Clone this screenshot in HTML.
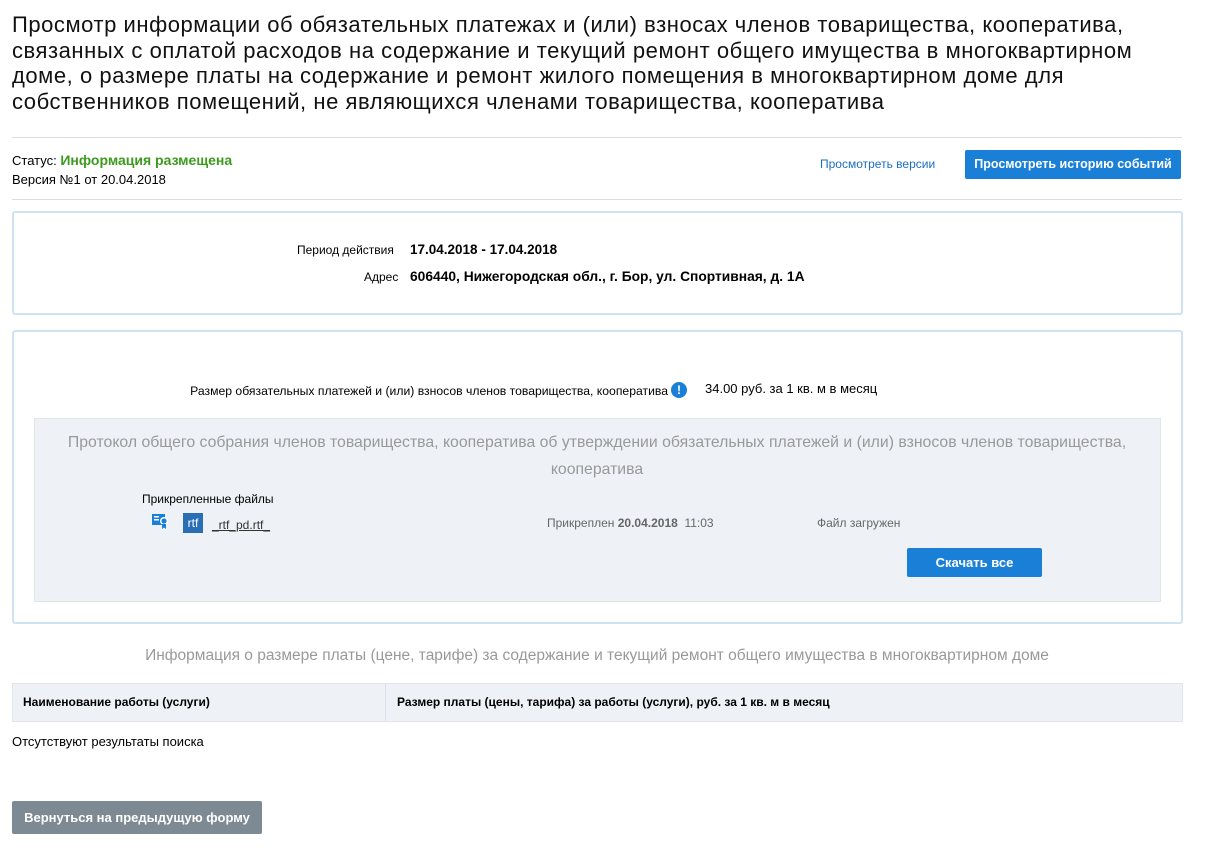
<!DOCTYPE html>
<html><head><meta charset="utf-8"><style>
body{margin:0;background:#fff;font-family:"Liberation Sans",sans-serif;color:#000;width:1217px;height:857px;overflow:hidden;position:relative}
.a{position:absolute;white-space:nowrap}
h1{position:absolute;left:12px;top:12px;margin:0;font-weight:normal;font-size:22px;line-height:25.7px;white-space:nowrap;letter-spacing:0.55px;color:#111}
.hr{position:absolute;left:12px;width:1170px;height:1px;background:#ddd}
.box{position:absolute;left:12px;width:1167px;border:2px solid #cfe3f4;border-radius:3px;background:#fff}
.btn{position:absolute;background:#1a7fd6;color:#fff;font-size:13px;font-weight:bold;text-align:center;border-radius:2px}
</style></head><body>
<h1>Просмотр информации об обязательных платежах и (или) взносах членов товарищества, кооператива,<br>связанных с оплатой расходов на содержание и текущий ремонт общего имущества в многоквартирном<br>доме, о размере платы на содержание и ремонт жилого помещения в многоквартирном доме для<br>собственников помещений, не являющихся членами товарищества, кооператива</h1>
<div class="hr" style="top:137px"></div>
<div class="a" style="left:12px;top:152px;font-size:13px">Статус: <b style="color:#3c9a1e;font-size:14px">Информация размещена</b></div>
<div class="a" style="left:12px;top:172px;font-size:13px">Версия №1 от 20.04.2018</div>
<div class="a" style="left:820px;top:157px;font-size:12px;color:#1a6fc0">Просмотреть версии</div>
<div class="btn" style="left:965px;top:150px;width:216px;height:29px;line-height:29px;font-size:12.5px">Просмотреть историю событий</div>
<div class="hr" style="top:199px"></div>
<div class="box" style="top:211px;height:100px"></div>
<div class="a" style="left:297px;top:243px;font-size:12px">Период действия</div>
<div class="a" style="left:410px;top:242px;font-size:13.5px;font-weight:bold">17.04.2018 - 17.04.2018</div>
<div class="a" style="left:364px;top:270px;font-size:12px">Адрес</div>
<div class="a" style="left:410px;top:269px;font-size:13.8px;font-weight:bold">606440, Нижегородская обл., г. Бор, ул. Спортивная, д. 1А</div>
<div class="box" style="top:330px;height:290px"></div>
<div class="a" style="right:549px;top:384px;font-size:12.2px">Размер обязательных платежей и (или) взносов членов товарищества, кооператива</div>
<div class="a" style="left:671px;top:382px;width:16px;height:16px;border-radius:50%;background:#1a7fd6;color:#fff;font-size:12px;font-weight:bold;text-align:center;line-height:16px">!</div>
<div class="a" style="left:705px;top:381px;font-size:13px">34.00 руб. за 1 кв. м в месяц</div>
<div style="position:absolute;left:34px;top:418px;width:1125px;height:182px;background:#eef1f5;border:1px solid #e2e6ea"></div>
<div class="a" style="left:34px;top:429px;width:1126px;text-align:center;white-space:normal;font-size:15.8px;line-height:27px;color:#999">Протокол общего собрания членов товарищества, кооператива об утверждении обязательных платежей и (или) взносов членов товарищества, кооператива</div>
<div class="a" style="left:142px;top:492px;font-size:12px">Прикрепленные файлы</div>
<svg class="a" style="left:152px;top:514px" width="18" height="16" viewBox="0 0 18 16"><rect x="0" y="0" width="13" height="11" fill="#1a7fd6"/><rect x="2" y="2" width="5" height="1.5" fill="#fff"/><rect x="2" y="5" width="5" height="1.5" fill="#fff"/><circle cx="12" cy="7" r="4" fill="#fff"/><circle cx="12" cy="7" r="2.6" fill="#1a7fd6"/><path d="M10 10 L10 15 L12 13.5 L14 15 L14 10Z" fill="#1a7fd6"/></svg>
<div class="a" style="left:183px;top:513px;width:20px;height:20px;background:#2a6eb5;color:#fff;font-size:12px;text-align:center;line-height:20px">rtf</div>
<div class="a" style="left:212px;top:518px;font-size:12px;color:#333;text-decoration:underline">_rtf_pd.rtf_</div>
<div class="a" style="left:547px;top:516px;font-size:12px;color:#666">Прикреплен <b>20.04.2018</b>&nbsp; 11:03</div>
<div class="a" style="left:817px;top:516px;font-size:12px;color:#666">Файл загружен</div>
<div class="btn" style="left:907px;top:548px;width:135px;height:29px;line-height:29px">Скачать все</div>
<div class="a" style="left:12px;top:647px;width:1170px;text-align:center;font-size:15.5px;color:#999">Информация о размере платы (цене, тарифе) за содержание и текущий ремонт общего имущества в многоквартирном доме</div>
<div style="position:absolute;left:12px;top:683px;width:1169px;height:37px;background:#eef1f5;border:1px solid #e2e6ea"></div>
<div style="position:absolute;left:385px;top:684px;width:1px;height:37px;background:#dde"></div>
<div class="a" style="left:23px;top:695px;font-size:12px;font-weight:bold">Наименование работы (услуги)</div>
<div class="a" style="left:397px;top:695px;font-size:12px;font-weight:bold">Размер платы (цены, тарифа) за работы (услуги), руб. за 1 кв. м в месяц</div>
<div class="a" style="left:12px;top:734px;font-size:13px">Отсутствуют результаты поиска</div>
<div class="btn" style="left:12px;top:801px;width:250px;height:33px;line-height:33px;background:#7d8a94;font-size:13px">Вернуться на предыдущую форму</div>
</body></html>
